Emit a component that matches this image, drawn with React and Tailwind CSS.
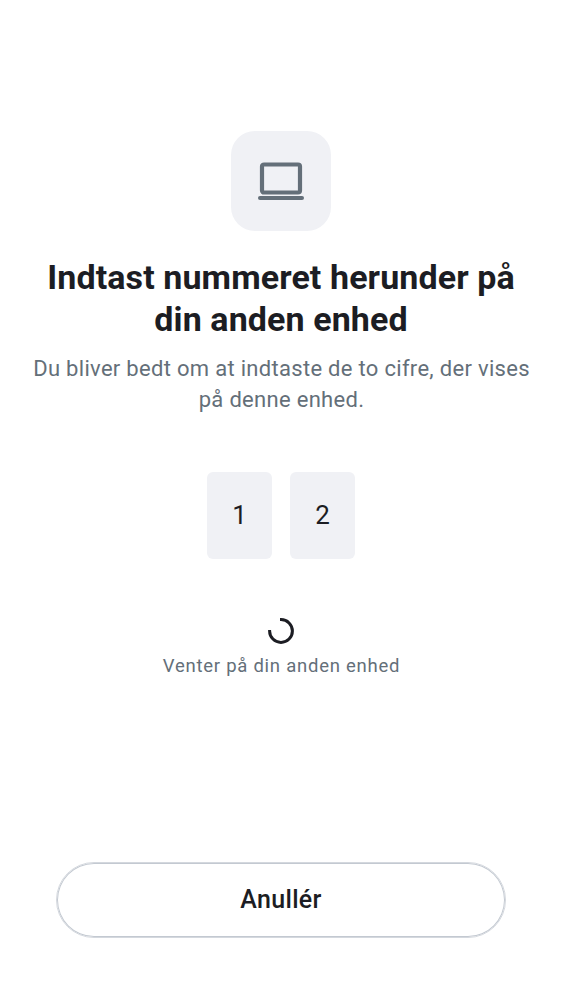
function LaptopIcon() {
  return (
    <svg width="46" height="38" viewBox="0 0 46 38" fill="none" aria-hidden="true">
      <rect x="4" y="2.5" width="38" height="28" rx="2" stroke="#646f79" strokeWidth="4.2" />
      <path d="M2 36H44" stroke="#646f79" strokeWidth="4" strokeLinecap="round" />
    </svg>
  );
}

function Spinner() {
  return (
    <svg width="26" height="26" viewBox="0 0 26 26" fill="none" aria-hidden="true">
      <path d="M12 1.6H13A11.4 11.4 0 1 1 1.6 13V12" stroke="#1c1d23" strokeWidth="3" />
    </svg>
  );
}

function Digit({ value }) {
  return (
    <div className="flex h-[87px] w-[65px] items-center justify-center rounded-[6px] bg-[#f0f1f5] pb-px text-[26px] leading-[30px] text-[#1c1d23]">
      {value}
    </div>
  );
}

export default function App() {
  return (
    <main className="flex h-[1000px] w-[562px] flex-col items-center bg-white pt-[131px] text-center font-['Roboto',sans-serif]">
      <div className="flex size-[100px] items-center justify-center rounded-[24px] bg-[#f0f1f5]">
        <LaptopIcon />
      </div>
      <h1 className="mt-[25px] text-[34px] leading-[42px] font-bold tracking-[0.1px] text-[#1c1d23]">
        Indtast nummeret herunder på<br />din anden enhed
      </h1>
      <p className="mt-[13px] pl-px text-[22px] leading-[31px] tracking-[0.3px] text-[#646f79]">
        Du bliver bedt om at indtaste de to cifre, der vises<br />på denne enhed.
      </p>
      <div className="mt-[57px] flex gap-[18px]">
        <Digit value="1" />
        <Digit value="2" />
      </div>
      <div className="mt-[59px] flex flex-col items-center">
        <Spinner />
        <p className="mt-[9px] pl-px text-[18.5px] leading-[26px] tracking-[0.75px] text-[#646f79]">Venter på din anden enhed</p>
      </div>
      <button className="mt-auto mb-[62px] h-[76px] w-[450px] rounded-full border border-[#d4d8de] text-[25px] font-medium tracking-[0.35px] text-[#1c1d23] shadow-[inset_0_0_0_1px_#c3c9d1]">
        Anullér
      </button>
    </main>
  );
}
